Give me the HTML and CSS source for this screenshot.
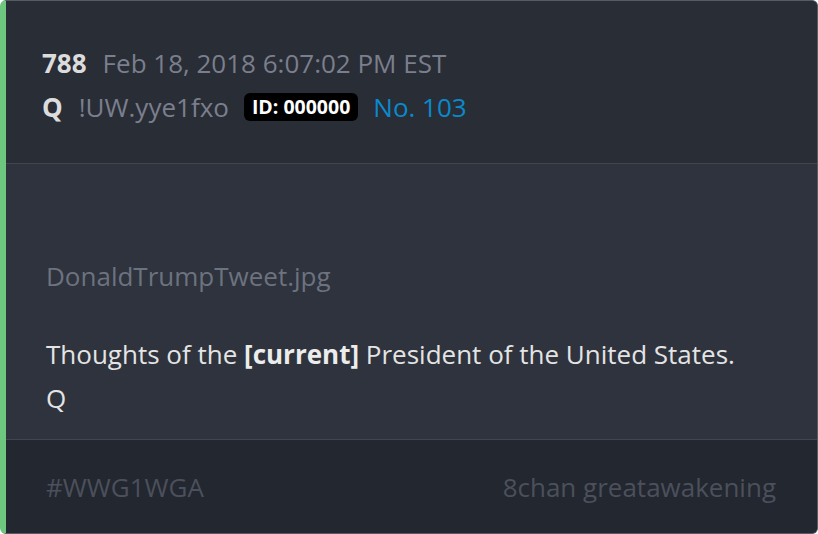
FILE: index.html
```html
<!DOCTYPE html>
<html lang="en">
<head>
    <meta charset="UTF-8">
    <title>Q Post 788</title>
    <link rel="stylesheet" href="styles.css">
</head>
<body>
    <div class="post">
        <header class="post-header">
            <div class="meta-line">
                <span class="post-num">788</span>
                <span class="post-date">Feb 18, 2018 6:07:02 PM EST</span>
            </div>
            <div class="meta-line">
                <span class="author">Q</span>
                <span class="trip">!UW.yye1fxo</span>
                <span class="id-badge">ID: 000000</span>
                <a class="post-link" href="#">No. 103</a>
            </div>
        </header>
        <main class="post-body">
            <div class="image-slot"></div>
            <div class="filename">DonaldTrumpTweet.jpg</div>
            <div class="message">
                <p>Thoughts of the <strong>[current]</strong> President of the United States.</p>
                <p>Q</p>
            </div>
        </main>
        <footer class="post-footer">
            <span>#WWG1WGA</span>
            <span>8chan greatawakening</span>
        </footer>
    </div>
</body>
</html>
```

FILE: styles.css
```css
/* Styles généraux */
body {
    margin: 0;
    padding: 0;
    background-color: #ffffff;
    font-family: "Open Sans", sans-serif;
    font-size: 26px;
}
.post {
    height: 534px;
    box-sizing: border-box;
    display: flex;
    flex-direction: column;
    border: 1px solid #565b64;
    border-left: 6px solid #6ec77f;
    border-radius: 6px;
    overflow: hidden;
    background-color: #2e333d;
}
.post-header {
    padding: 40px 40px 34px 36px;
    background-color: #292d36;
    border-bottom: 1px solid #42464f;
}
.meta-line {
    display: flex;
    align-items: center;
    height: 44px;
}
.post-num,
.author {
    font-weight: bold;
    color: #dcdcdc;
    margin-right: 16px;
}
.post-date,
.trip {
    color: #7b7f8d;
    margin-right: 15px;
}
.id-badge {
    background-color: #000000;
    color: #ffffff;
    font-weight: bold;
    font-size: 19.5px;
    line-height: 28px;
    padding: 0 8px;
    border-radius: 6px;
    margin-right: 15px;
}
.post-link {
    color: #0a89cc;
    text-decoration: none;
}
.post-body {
    flex: 1;
    padding: 0 40px;
}
.image-slot {
    height: 90px;
}
.filename {
    line-height: 44px;
    color: #6d727f;
}
.message {
    margin-top: 34px;
    color: #e4e4e4;
}
.message p {
    margin: 0;
    line-height: 44px;
}
.message strong {
    color: #ececec;
}
.post-footer {
    display: flex;
    justify-content: space-between;
    align-items: center;
    height: 93px;
    padding: 0 41px 0 40px;
    background-color: #23272f;
    border-top: 1px solid #42464f;
    color: #4b505c;
}
```
